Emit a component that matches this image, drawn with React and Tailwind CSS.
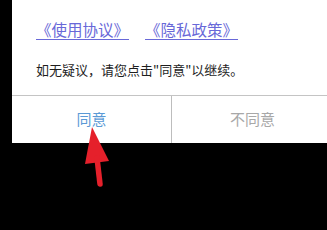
import React from 'react';

const cjk = { fontFamily: '"Noto Sans CJK SC", "Noto Sans", sans-serif' };

const Arrow = () => (
  <svg className="absolute left-0 top-0" width="327" height="230" viewBox="0 0 327 230">
    <polygon points="92,127 85,164 109,161" fill="#e5202b" />
    <line x1="97" y1="158" x2="100" y2="184" stroke="#e5202b" strokeWidth="5.5" strokeLinecap="round" />
  </svg>
);

const App = () => {
  return (
    <div className="relative w-[327px] h-[230px] overflow-hidden bg-black" style={cjk}>
      <div className="ml-[12px] w-[321px] bg-white">
        <div className="pl-[24px] pt-[19px]">
          <div className="flex h-[20px] items-center text-[15.5px] leading-[20px] text-[#6868d8]">
            <span className="underline underline-offset-[3px] pr-[1px]">《使用协议》</span>
            <span className="ml-[15px] underline underline-offset-[3px] pr-[1px]">《隐私政策》</span>
          </div>
          <p className="mt-[21px] h-[20px] text-[13px] leading-[20px] text-[#1e1e1e]">
            如无疑议，请您点击"同意"以继续。
          </p>
        </div>
        <div className="mt-[15px] flex h-[48px] border-t border-[#c4c4c4]">
          <button className="w-[160px] border-r border-[#bdbdbd] text-[15px] text-[#5b9ad6]">同意</button>
          <button className="flex-1 text-[15px] text-[#a8a8a8]">不同意</button>
        </div>
      </div>
      <Arrow />
    </div>
  );
};

export default App;
